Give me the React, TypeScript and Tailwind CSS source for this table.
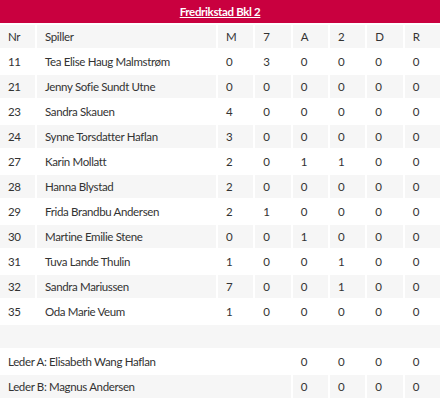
import React from "react";

const players: [string, string, number[]][] = [
  ["11", "Tea Elise Haug Malmstrøm", [0, 3, 0, 0, 0, 0]],
  ["21", "Jenny Sofie Sundt Utne", [0, 0, 0, 0, 0, 0]],
  ["23", "Sandra Skauen", [4, 0, 0, 0, 0, 0]],
  ["24", "Synne Torsdatter Haflan", [3, 0, 0, 0, 0, 0]],
  ["27", "Karin Mollatt", [2, 0, 1, 1, 0, 0]],
  ["28", "Hanna Blystad", [2, 0, 0, 0, 0, 0]],
  ["29", "Frida Brandbu Andersen", [2, 1, 0, 0, 0, 0]],
  ["30", "Martine Emilie Stene", [0, 0, 1, 0, 0, 0]],
  ["31", "Tuva Lande Thulin", [1, 0, 0, 1, 0, 0]],
  ["32", "Sandra Mariussen", [7, 0, 0, 1, 0, 0]],
  ["35", "Oda Marie Veum", [1, 0, 0, 0, 0, 0]],
];

const rowCls = "grid grid-cols-[35px_179px_repeat(6,1fr)] gap-x-[2px] h-[23px]";

function Cell({ children, gray, className = "" }: { children?: React.ReactNode; gray: boolean; className?: string }) {
  return (
    <div className={`flex items-center pl-[8px] ${gray ? "bg-[#f6f6f6]" : "bg-white"} ${className}`}>
      {children}
    </div>
  );
}

export default function App() {
  return (
    <div
      className="w-[440px] h-[400px] bg-white text-[#333333] text-[11.5px] tracking-[-0.35px] [font-variant-ligatures:none] flex flex-col gap-y-[2px]"
      style={{ fontFamily: "Lato, 'Liberation Sans', sans-serif" }}
    >
      <div className="h-[23px] bg-[#c9003f] flex items-center justify-center">
        <span className="text-white font-bold underline text-[11.5px]">Fredrikstad Bkl 2</span>
      </div>
      <div className={rowCls}>
        {["Nr", "Spiller", "M", "7", "A", "2", "D", "R"].map((h) => (
          <Cell key={h} gray>
            {h}
          </Cell>
        ))}
      </div>
      {players.map(([nr, name, vals], i) => {
        const gray = i % 2 === 1;
        return (
          <div key={nr} className={rowCls}>
            <Cell gray={gray}>{nr}</Cell>
            <Cell gray={gray}>{name}</Cell>
            {vals.map((v, j) => (
              <Cell key={j} gray={gray}>
                {v}
              </Cell>
            ))}
          </div>
        );
      })}
      <div className="h-[23px] bg-[#f6f6f6]" />
      {["Leder A: Elisabeth Wang Haflan", "Leder B: Magnus Andersen"].map((l, i) => {
        const gray = i === 1;
        return (
          <div key={l} className={rowCls}>
            <Cell gray={gray} className="col-span-4">
              {l}
            </Cell>
            {[0, 0, 0, 0].map((v, j) => (
              <Cell key={j} gray={gray}>
                {v}
              </Cell>
            ))}
          </div>
        );
      })}
    </div>
  );
}
